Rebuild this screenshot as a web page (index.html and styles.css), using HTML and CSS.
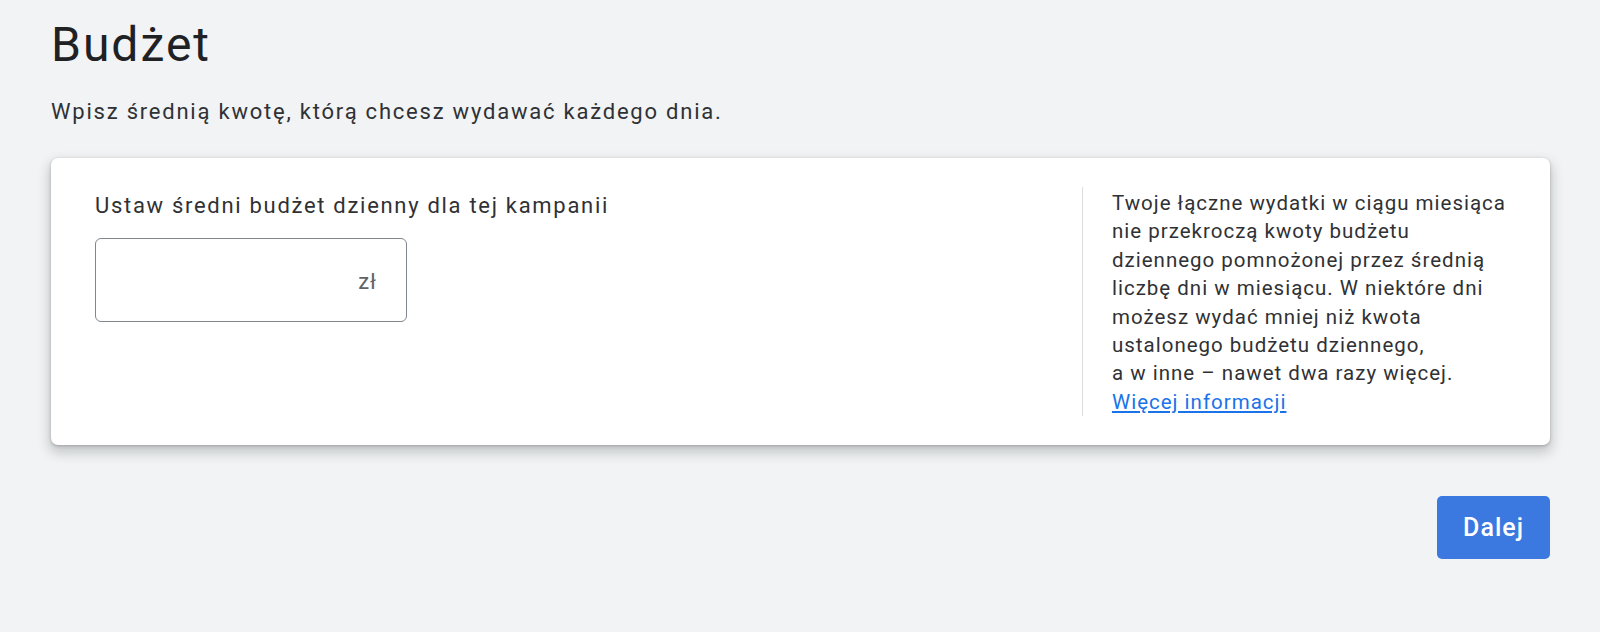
FILE: index.html
```html
<!DOCTYPE html>
<html lang="pl">
<head>
<meta charset="utf-8">
<title>Budżet</title>
<link rel="stylesheet" href="styles.css">
</head>
<body>
<main class="page">
  <h1 class="title">Budżet</h1>
  <p class="subtitle">Wpisz średnią kwotę, którą chcesz wydawać każdego dnia.</p>
  <section class="card">
    <div class="card-main">
      <label class="field-label" for="budget">Ustaw średni budżet dzienny dla tej kampanii</label>
      <div class="money-input">
        <input id="budget" class="money-field" type="text" aria-label="Budżet dzienny">
        <span class="currency">zł</span>
      </div>
    </div>
    <aside class="card-help">
      <p class="help-text">Twoje łączne wydatki w&nbsp;ciągu miesiąca<br>nie przekroczą kwoty budżetu<br>dziennego pomnożonej przez średnią<br>liczbę dni w&nbsp;miesiącu. W&nbsp;niektóre dni<br>możesz wydać mniej niż kwota<br>ustalonego budżetu dziennego,<br>a&nbsp;w&nbsp;inne – nawet dwa razy więcej.<br><a class="help-link" href="#">Więcej informacji</a></p>
    </aside>
  </section>
  <div class="actions">
    <button class="btn-primary" type="button">Dalej</button>
  </div>
</main>
</body>
</html>
```

FILE: styles.css
```css
* { box-sizing: border-box; }

html, body {
  margin: 0;
  padding: 0;
  background: #f1f3f4;
}

body {
  font-family: Roboto, "Noto Sans", "Liberation Sans", sans-serif;
  color: #202124;
}

.page {
  padding: 17px 50px 0 51px;
}

.title {
  margin: 0;
  font-size: 48px;
  line-height: 56px;
  font-weight: 400;
  letter-spacing: 2px;
  color: #202124;
}

.subtitle {
  margin: 25px 0 0 0;
  font-size: 22px;
  line-height: 28px;
  letter-spacing: 1.78px;
  color: #303134;
}

.card {
  margin-top: 32px;
  background: #fff;
  border-radius: 7px;
  box-shadow: 0 1px 3px rgba(60, 64, 67, 0.3), 0 6px 12px 2px rgba(60, 64, 67, 0.24);
  display: flex;
  padding: 29px 44px 29px 44px;
  min-height: 286px;
}

.card-main {
  flex: 1;
  padding-top: 5px;
}

.field-label {
  display: block;
  font-size: 22px;
  line-height: 28px;
  letter-spacing: 1.7px;
  color: #303134;
}

.money-input {
  margin-top: 18px;
  width: 312px;
  height: 84px;
  border: 1px solid #80868b;
  border-radius: 6px;
  display: flex;
  align-items: center;
  padding: 0 29px 0 16px;
}

.money-field {
  flex: 1;
  min-width: 0;
  border: 0;
  outline: none;
  background: transparent;
  font: inherit;
  font-size: 20px;
}

.currency {
  font-size: 22px;
  letter-spacing: 1px;
  color: #5f6368;
  padding-top: 2px;
}

.card-help {
  flex: 0 0 419px;
  border-left: 1px solid #dadce0;
  padding: 2px 0 0 29px;
}

.help-text {
  margin: 0;
  font-size: 20.5px;
  line-height: 28.4px;
  letter-spacing: 1px;
  color: #303134;
  white-space: nowrap;
}

.help-link {
  color: #1a73e8;
  text-decoration: underline;
}

.actions {
  display: flex;
  justify-content: flex-end;
  margin-top: 51px;
}

.btn-primary {
  width: 113px;
  height: 63px;
  border: 0;
  border-radius: 5px;
  background: #3b78e0;
  color: #fff;
  font-family: Roboto, "Noto Sans", sans-serif;
  font-size: 25px;
  font-weight: 500;
  letter-spacing: 1px;
}
```
